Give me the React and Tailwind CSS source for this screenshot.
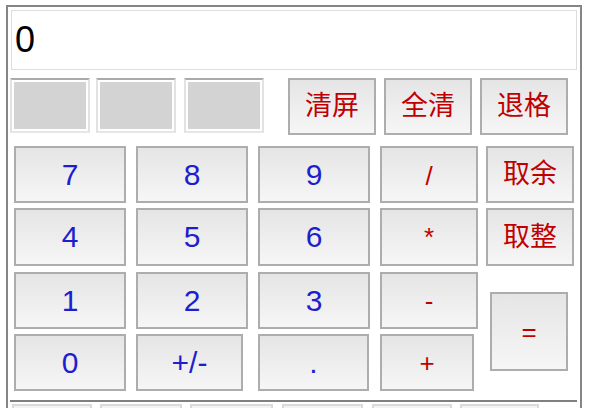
import React from "react";

const font = { fontFamily: '"Liberation Sans", Arial, "Noto Sans CJK SC", sans-serif' };

function Btn({ w, h = "h-[57px]", ml, color = "blue", size, children }) {
  const col = color === "blue" ? "text-[#1e1ecf]" : "text-[#c00000]";
  return (
    <button
      className={`${w} ${h} ${ml} ${col} ${size} shrink-0 flex items-center justify-center border-2 border-[#adadad] bg-gradient-to-b from-[#e5e5e5] to-[#f6f6f6] leading-none`}
      style={font}
    >
      {children}
    </button>
  );
}

function GrayBox({ ml }) {
  return (
    <div className={`${ml} w-[80px] h-[55px] shrink-0 border-2 border-t-[#aaaaaa] border-l-[#e2e2e2] border-r-[#e2e2e2] border-b-[#e6e6e6] bg-white p-[2px]`}>
      <div className="w-full h-full bg-[#d3d3d3]" />
    </div>
  );
}

function LowBox({ w, ml }) {
  return (
    <div className={`${w} ${ml} h-[30px] shrink-0 border-2 border-[#dadada] bg-[#f3f3f3]`} />
  );
}

export default function App() {
  const digit = "text-[30px]";
  const cjk = "text-[27px]";
  const op = "text-[26px]";
  return (
    <div className="h-[408px] w-[590px] overflow-hidden bg-white" style={font}>
      <div className="pl-[6px] pt-[5px]">
        <div className="w-[576px] h-[440px] border-2 border-[#858585]">
          {/* display */}
          <div className="ml-[3px] mt-[3px] w-[566px] h-[60px] border border-[#dddddd] flex items-center pl-[3px] text-[36px] text-black leading-none">
            0
          </div>
          {/* row 2 */}
          <div className="flex mt-[8px] items-start">
            <GrayBox ml="ml-[2px]" />
            <GrayBox ml="ml-[6px]" />
            <GrayBox ml="ml-[8px]" />
            <Btn w="w-[88px]" ml="ml-[24px]" color="red" size={cjk}>清屏</Btn>
            <Btn w="w-[88px]" ml="ml-[8px]" color="red" size={cjk}>全清</Btn>
            <Btn w="w-[88px]" ml="ml-[8px]" color="red" size={cjk}>退格</Btn>
          </div>
          {/* row 3 */}
          <div className="flex mt-[11px]">
            <Btn w="w-[112px]" ml="ml-[6px]" size={digit}>7</Btn>
            <Btn w="w-[112px]" ml="ml-[10px]" size={digit}>8</Btn>
            <Btn w="w-[112px]" ml="ml-[10px]" size={digit}>9</Btn>
            <Btn w="w-[98px]" ml="ml-[10px]" color="red" size={op}><span className="mt-[3px]">/</span></Btn>
            <Btn w="w-[88px]" ml="ml-[8px]" color="red" size={cjk}>取余</Btn>
          </div>
          {/* row 4 */}
          <div className="flex mt-[5px]">
            <Btn w="w-[112px]" ml="ml-[6px]" h="h-[58px]" size={digit}>4</Btn>
            <Btn w="w-[112px]" ml="ml-[10px]" h="h-[58px]" size={digit}>5</Btn>
            <Btn w="w-[112px]" ml="ml-[10px]" h="h-[58px]" size={digit}>6</Btn>
            <Btn w="w-[98px]" ml="ml-[10px]" h="h-[58px]" color="red" size={op}>*</Btn>
            <Btn w="w-[88px]" ml="ml-[8px]" h="h-[58px]" color="red" size={cjk}>取整</Btn>
          </div>
          {/* rows 5-6 with = */}
          <div className="flex mt-[6px] items-center">
            <div className="flex flex-col">
              <div className="flex">
                <Btn w="w-[112px]" ml="ml-[6px]" h="h-[57px]" size={digit}>1</Btn>
                <Btn w="w-[112px]" ml="ml-[10px]" h="h-[57px]" size={digit}>2</Btn>
                <Btn w="w-[112px]" ml="ml-[10px]" h="h-[57px]" size={digit}>3</Btn>
                <Btn w="w-[98px]" ml="ml-[10px]" h="h-[57px]" color="red" size={op}>-</Btn>
              </div>
              <div className="flex mt-[5px]">
                <Btn w="w-[112px]" ml="ml-[6px]" size={digit}>0</Btn>
                <Btn w="w-[107px]" ml="ml-[10px]" size={digit}>+/-</Btn>
                <Btn w="w-[111px]" ml="ml-[15px]" size={digit}>.</Btn>
                <Btn w="w-[94px]" ml="ml-[11px]" color="red" size={op}>+</Btn>
              </div>
            </div>
            <Btn w="w-[78px]" ml="ml-[12px]" h="h-[79px]" color="red" size={op}>=</Btn>
          </div>
          {/* separator */}
          <div className="ml-[2px] mt-[9px] w-[567px] h-[2px] bg-[#808080]" />
          <div className="flex mt-[2px]">
            <LowBox w="w-[80px]" ml="ml-[4px]" />
            <LowBox w="w-[82px]" ml="ml-[8px]" />
            <LowBox w="w-[83px]" ml="ml-[8px]" />
            <LowBox w="w-[81px]" ml="ml-[9px]" />
            <LowBox w="w-[80px]" ml="ml-[9px]" />
            <LowBox w="w-[79px]" ml="ml-[8px]" />
          </div>
        </div>
      </div>
    </div>
  );
}
